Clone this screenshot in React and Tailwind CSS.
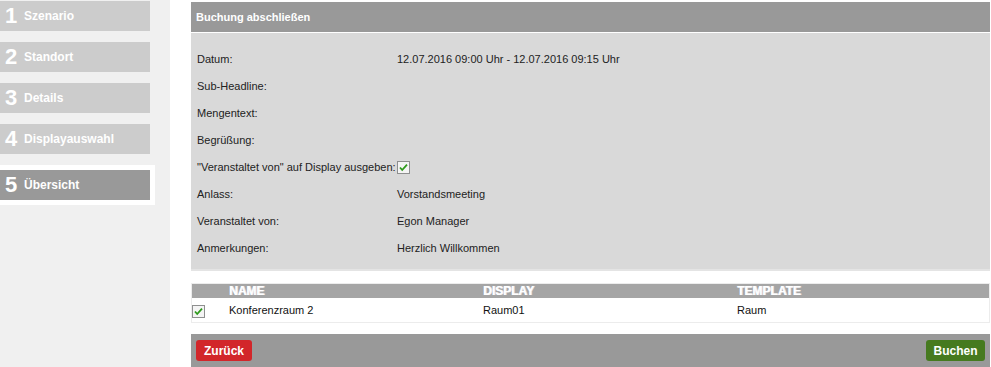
import React from 'react'

const steps = [
  { n: '1', label: 'Szenario' },
  { n: '2', label: 'Standort' },
  { n: '3', label: 'Details' },
  { n: '4', label: 'Displayauswahl' },
]

const details = [
  { label: 'Datum:', value: '12.07.2016 09:00 Uhr - 12.07.2016 09:15 Uhr' },
  { label: 'Sub-Headline:', value: '' },
  { label: 'Mengentext:', value: '' },
  { label: 'Begrüßung:', value: '' },
  { label: '"Veranstaltet von" auf Display ausgeben:', check: true },
  { label: 'Anlass:', value: 'Vorstandsmeeting' },
  { label: 'Veranstaltet von:', value: 'Egon Manager' },
  { label: 'Anmerkungen:', value: 'Herzlich Willkommen' },
]

function Check() {
  return (
    <svg width="13" height="13" viewBox="0 0 13 13" className="shrink-0">
      <rect x="0.5" y="0.5" width="12" height="12" fill="#f4f4f4" stroke="#8e8f8f" />
      <path d="M3 6.5 L5.2 9 L10 3.6" fill="none" stroke="#2e9a1c" strokeWidth="1.8" />
    </svg>
  )
}

function Step({ n, label, active }) {
  return (
    <div className={`flex items-center h-[30px] w-[150px] ${active ? 'bg-[#999999]' : 'bg-[#cccccc]'}`}>
      <span className="w-[24px] pl-[5px] text-[22px] font-bold text-white leading-none">{n}</span>
      <span className="text-[12px] font-bold text-white">{label}</span>
    </div>
  )
}

function App() {
  return (
    <div className="flex w-full h-[367px] overflow-hidden bg-white text-[#222] font-['Liberation_Sans',Arial,sans-serif]">
      <div className="w-[170px] shrink-0 bg-[#f0f0f0] pt-[1px] flex flex-col gap-[11px]">
        {steps.map(s => (
          <Step key={s.n} {...s} />
        ))}
        <div className="w-[155px] bg-white py-[5px] pr-[5px]">
          <Step n="5" label="Übersicht" active />
        </div>
      </div>

      <div className="flex-1 pl-[21px] pr-[1px] pt-[2px]">
        <div className="h-[30px] bg-[#999999] flex items-center pl-[5px] text-[11px] font-bold text-white">
          Buchung abschließen
        </div>
        <div className="border-t border-white bg-[#d9d9d9] border-b-2 border-b-[#e4e4e4] pt-[13px] pb-[7px] text-[11px]">
          {details.map(d => (
            <div key={d.label} className="flex items-center h-[27px] pl-[6px]">
              <span className="w-[200px] shrink-0 whitespace-nowrap">{d.label}</span>
              {d.check ? <Check /> : <span>{d.value}</span>}
            </div>
          ))}
        </div>

        <div className="mt-[12px] border border-[#ececec]">
          <div className="grid grid-cols-[37px_254px_254px_1fr] h-[14px] bg-[#a5a5a5] items-center text-[12px] font-bold text-white leading-none [text-shadow:1px_0_0_#e8e8f0]">
            <span></span>
            <span>NAME</span>
            <span>DISPLAY</span>
            <span>TEMPLATE</span>
          </div>
          <div className="grid grid-cols-[37px_254px_254px_1fr] h-[24px] items-center text-[11px] text-[#111]">
            <span className="pt-[2px]"><Check /></span>
            <span>Konferenzraum 2</span>
            <span>Raum01</span>
            <span>Raum</span>
          </div>
        </div>

        <div className="mt-[11px] h-[40px] bg-[#999999] flex justify-between items-start pt-[6px] px-[5px]">
          <button className="h-[21px] w-[56px] rounded-[3px] bg-[#d2262a] text-white text-[12px] font-bold">
            Zurück
          </button>
          <button className="h-[21px] w-[59px] rounded-[3px] bg-[#467a1f] text-white text-[12px] font-bold">
            Buchen
          </button>
        </div>
      </div>
    </div>
  )
}

export default App
